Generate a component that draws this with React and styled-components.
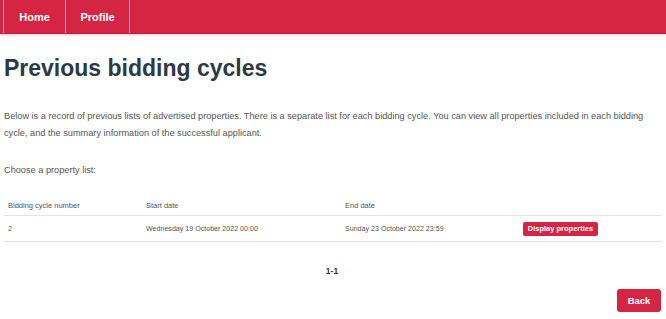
import styled, { createGlobalStyle } from "styled-components";

const GlobalStyle = createGlobalStyle`
  body {
    margin: 0;
    background: #fff;
    font-family: "Liberation Sans", Arial, sans-serif;
  }
`;

const Nav = styled.nav`
  height: 33px;
  background: #d62544;
  display: flex;
  padding-left: 3px;
  border-bottom: 1px solid #c21d3a;
  box-shadow: 0 1px 3px rgba(214, 37, 68, 0.25);
`;

const NavItem = styled.a`
  display: flex;
  align-items: center;
  justify-content: center;
  width: ${(p) => p.width}px;
  border-left: 1px solid rgba(255, 255, 255, 0.55);
  color: #fff;
  font-size: 11px;
  font-weight: bold;
  text-decoration: none;
  &:last-child {
    border-right: 1px solid rgba(255, 255, 255, 0.55);
  }
`;

const Main = styled.main`
  padding: 0 4px;
`;

const Title = styled.h1`
  margin: 20px 0 0;
  font-size: 23px;
  line-height: 28px;
  color: #2d3a45;
`;

const Text = styled.p`
  margin: ${(p) => p.top}px 0 0;
  font-size: 9.2px;
  line-height: 17px;
  color: #555;
  width: 652px;
`;

const Table = styled.div`
  margin-top: 16px;
  display: grid;
  grid-template-columns: 138px 199px 178px 1fr;
  font-size: 7.5px;
  color: #555;
`;

const HeadCell = styled.div`
  padding: 0 4px;
  height: 20px;
  display: flex;
  align-items: center;
  border-bottom: 1px solid #e4e4e4;
`;

const Cell = styled.div`
  padding: 0 4px;
  height: 25px;
  display: flex;
  align-items: center;
  font-size: 7.1px;
  border-bottom: 1px solid #e4e4e4;
`;

const SmallButton = styled.button`
  height: 14px;
  width: 75px;
  border: none;
  border-radius: 2px;
  background: #d62544;
  color: #fff;
  font-family: inherit;
  font-size: 7.5px;
  font-weight: bold;
  padding: 0;
`;

const Pager = styled.div`
  margin-top: 24px;
  text-align: center;
  font-size: 8.5px;
  font-weight: bold;
  color: #333;
  padding-right: 2px;
`;

const Footer = styled.div`
  display: flex;
  justify-content: flex-end;
  margin: 13px 1px 0 0;
`;

const BackButton = styled.button`
  width: 44px;
  height: 23px;
  border: none;
  border-radius: 3px;
  background: #d62544;
  color: #fff;
  font-family: inherit;
  font-size: 9.5px;
  font-weight: bold;
  padding: 0;
`;

const rows = [
  {
    cycle: "2",
    start: "Wednesday 19 October 2022 00:00",
    end: "Sunday 23 October 2022 23:59",
  },
];

export default function App() {
  return (
    <>
      <GlobalStyle />
      <Nav>
        <NavItem width={61}>Home</NavItem>
        <NavItem width={63}>Profile</NavItem>
      </Nav>
      <Main>
        <Title>Previous bidding cycles</Title>
        <Text top={26}>
          Below is a record of previous lists of advertised properties. There is a separate list for each
          bidding cycle. You can view all properties included in each bidding cycle, and the summary
          information of the successful applicant.
        </Text>
        <Text top={20}>Choose a property list:</Text>
        <Table>
          <HeadCell>Bidding cycle number</HeadCell>
          <HeadCell>Start date</HeadCell>
          <HeadCell>End date</HeadCell>
          <HeadCell />
          {rows.map((r) => (
            <>
              <Cell>{r.cycle}</Cell>
              <Cell>{r.start}</Cell>
              <Cell>{r.end}</Cell>
              <Cell>
                <SmallButton>Display properties</SmallButton>
              </Cell>
            </>
          ))}
        </Table>
        <Pager>1-1</Pager>
        <Footer>
          <BackButton>Back</BackButton>
        </Footer>
      </Main>
    </>
  );
}
